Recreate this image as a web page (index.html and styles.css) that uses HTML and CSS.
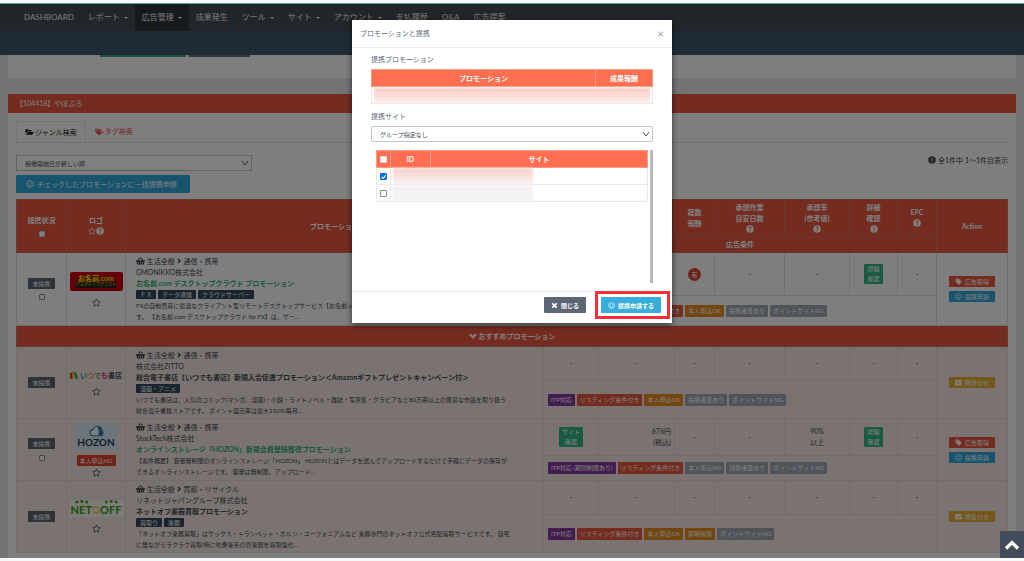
FILE: index.html
```html
<!DOCTYPE html>
<html lang="ja">
<head>
<meta charset="utf-8">
<meta name="viewport" content="width=device-width, initial-scale=1">
<title>広告管理</title>
<link rel="stylesheet" href="styles.css">
</head>
<body>
<svg class="sprite" aria-hidden="true">
  <symbol id="smile" viewBox="0 0 16 16"><circle cx="8" cy="8" r="6.6" fill="none" stroke="currentColor" stroke-width="1.6"/><circle cx="5.6" cy="6.3" r="1.1" fill="currentColor"/><circle cx="10.4" cy="6.3" r="1.1" fill="currentColor"/><path d="M4.5 9.3q3.5 4.4 7 0" fill="none" stroke="currentColor" stroke-width="1.5"/></symbol>
  <symbol id="tag" viewBox="0 0 16 16"><path fill="currentColor" fill-rule="evenodd" d="M1 2.5Q1 1 2.500 1H7q1 0 1.700.7l6 6q.9 1 0 2l-5 5q-1 .9-2 0l-6-6Q1 8 1 7zM4.300 3a1.400 1.400 0 1 0 .01 0z"/></symbol>
  <symbol id="tags" viewBox="0 0 20 16"><path fill="currentColor" fill-rule="evenodd" d="M1 2.500Q1 1 2.500 1H7q1 0 1.700.7l6 6q.9 1 0 2l-5 5q-1 .9-2 0l-6-6Q1 8 1 7zM4.300 3a1.400 1.400 0 1 0 .01 0z"/><path fill="currentColor" d="M9.500 1H11q1 0 1.700.7l6 6q.9 1 0 2l-5 5q-.8.8-1.700.3l5-5.300q1-1 0-2z"/></symbol>
  <symbol id="folder" viewBox="0 0 18 16"><path fill="currentColor" d="M1 12V3.500Q1 2.500 2 2.500h3.500q1 0 1 1v.7H12q1.200 0 1.200 1.200V7H6Q4.600 7 3.800 8zM2 13.500l3-4.700q.5-.8 1.400-.8H17q.8 0 .3.800l-2.500 4q-.5.700-1.400.7z"/></symbol>
  <symbol id="basket" viewBox="0 0 18 16"><path fill="none" stroke="currentColor" stroke-width="2" d="M4 8l3-6h4l3 6"/><path fill="currentColor" fill-rule="evenodd" d="M0 6.500h18v2.500h-1l-1.300 6H2.300L1 9H0zM4.500 10v3H6v-3zm3.800 0v3h1.500v-3zm3.700 0v3h1.500v-3z"/></symbol>
  <symbol id="right" viewBox="0 0 10 16"><path fill="none" stroke="currentColor" stroke-width="3" d="M2 4l4 4-4 4"/></symbol>
  <symbol id="down" viewBox="0 0 16 16"><path fill="none" stroke="currentColor" stroke-width="4.500" d="M2 4.500l6 6 6-6"/></symbol>
  <symbol id="up" viewBox="0 0 16 16"><path fill="none" stroke="currentColor" stroke-width="3.200" d="M2 11.500l6-6 6 6"/></symbol>
  <symbol id="mail" viewBox="0 0 16 16"><path fill="currentColor" d="M0 2h16v1.800L8 9.500 0 3.800zM0 5.500l8 5.700 8-5.700V14H0z"/></symbol>
  <symbol id="cross" viewBox="0 0 16 16"><path fill="none" stroke="currentColor" stroke-width="4" d="M3 3l10 10M13 3L3 13"/></symbol>
  <symbol id="star" viewBox="0 0 16 16"><path fill="none" stroke="currentColor" stroke-width="1.300" d="M8 1.500l2 4.400 4.700.6-3.500 3.300.9 4.700L8 12.200l-4.100 2.300.9-4.700L1.300 6.500 6 5.900z"/></symbol>
  <symbol id="help" viewBox="0 0 16 16"><circle cx="8" cy="8" r="7.500" fill="currentColor"/><path class="mark" d="M5.500 6.200q.2-2.200 2.500-2.200t2.500 1.900q0 1.200-1.300 1.900-1.200.7-1.200 1.700M8 11v2"/></symbol>
  <symbol id="info" viewBox="0 0 16 16"><circle cx="8" cy="8" r="7.500" fill="currentColor"/><path class="mark" d="M8 3.500v6M8 11v2"/></symbol>
</svg>

<div class="screen">
  <header>
    <nav class="nav">
      <a href="#">DASHBOARD</a>
      <a href="#" class="has-menu">レポート</a>
      <a href="#" class="has-menu current">広告管理</a>
      <a href="#">成果発生</a>
      <a href="#" class="has-menu">ツール</a>
      <a href="#" class="has-menu">サイト</a>
      <a href="#" class="has-menu">アカウント</a>
      <a href="#">支払履歴</a>
      <a href="#">Q&amp;A</a>
      <a href="#">広告提案</a>
    </nav>
    <div class="subbar"></div>
  </header>

  <main class="content">
    <section class="search-end"><span class="stub stub-green"></span><span class="stub stub-grey"></span></section>

    <section class="panel">
      <h1 class="panel-title">【104418】やぽぷろ</h1>
      <div class="panel-body">
        <div class="tabs">
          <a href="#" class="tab active"><svg class="icon wide"><use href="#folder"/></svg>ジャンル検索</a>
          <a href="#" class="tab"><svg class="icon wide"><use href="#tags"/></svg>タグ検索</a>
        </div>
        <div class="toolbar">
          <select class="select sort" aria-label="並び順"><option>稼働開始日が新しい順</option></select>
          <p class="count"><svg class="icon on-white"><use href="#info"/></svg> 全1件中 1〜1件目表示</p>
        </div>
        <button class="btn blue bulk"><svg class="icon"><use href="#smile"/></svg>チェックしたプロモーションに一括提携申請</button>

        <table class="list">
          <colgroup><col class="c-status"><col class="c-logo"><col><col class="c-site"><col class="c-pay"><col class="c-multi"><col class="c-days"><col class="c-rate"><col class="c-detail"><col class="c-epc"><col class="c-action"></colgroup>
          <thead>
            <tr class="h-top">
              <th rowspan="2">提携状況<br><input type="checkbox" class="check filled" aria-label="すべて選択"></th>
              <th rowspan="2">ロゴ<br><svg class="icon"><use href="#star"/></svg><svg class="icon"><use href="#help"/></svg></th>
              <th rowspan="2">プロモーション</th>
              <th></th><th></th>
              <th>複数<br>報酬</th>
              <th>承認作業<br>目安日数<br><svg class="icon"><use href="#help"/></svg></th>
              <th>承認率<br>(参考値)<br><svg class="icon"><use href="#help"/></svg></th>
              <th>詳細<br>確認<br><svg class="icon"><use href="#info"/></svg></th>
              <th>EPC<br><svg class="icon"><use href="#help"/></svg></th>
              <th rowspan="2">Action</th>
            </tr>
            <tr class="h-sub"><th colspan="7">広告条件</th></tr>
          </thead>
          <tbody>
            <tr class="r-43">
              <td rowspan="2" class="mid"><span class="state">未提携</span><br><input type="checkbox" class="check" aria-label="お名前.comを選択"></td>
              <td rowspan="2" class="mid"><div class="logo onamae"><b>お名前.com</b><i>デスクトップクラウド</i></div><svg class="icon star"><use href="#star"/></svg></td>
              <td rowspan="2" class="promo">
                <p class="genre"><svg class="icon wide"><use href="#basket"/></svg> 生活全般 <svg class="icon thin"><use href="#right"/></svg> 通信・携帯</p>
                <p>GMONIKKO株式会社</p>
                <p class="name"><a href="#">お名前.com デスクトップクラウド プロモーション</a></p>
                <p class="tags"><span>ＦＸ</span><span>データ通信</span><span>クラウドサーバー</span></p>
                <p class="desc">FXの自動売買に最適なクライアント型リモートデスクトップサービス【お名前.com】で<br>す。 【お名前.com デスクトップクラウド for FX】は、サー...</p>
              </td>
              <td></td><td></td>
              <td class="mid"><span class="round">有</span></td>
              <td class="mid">-</td><td class="mid">-</td>
              <td class="mid"><button class="btn green two">詳細<br>確認</button></td>
              <td class="mid">-</td>
              <td rowspan="2" class="mid act"><button class="btn red"><svg class="icon"><use href="#tag"/></svg>広告取得</button><button class="btn blue"><svg class="icon"><use href="#smile"/></svg>提携申請</button></td>
            </tr>
            <tr class="r-30"><td colspan="7" class="labels"><span class="purple">ITP対応 (期間制限あり)</span><span class="red">リスティング条件付き</span><span class="orange">本人申込OK</span><span class="grey">提携審査あり</span><span class="grey">ポイントサイトNG</span></td></tr>

            <tr class="band"><th colspan="11"><svg class="icon"><use href="#down"/></svg> おすすめプロモーション</th></tr>

            <tr class="r-34 rec">
              <td rowspan="2" class="mid"><span class="state">未提携</span></td>
              <td rowspan="2" class="mid"><div class="logo itsudemo"><svg class="books" viewBox="0 0 14 14"><path fill="#e8452c" d="M0 3h4v11H0z"/><path fill="#f5a623" d="M4 1h3v13H4z"/><path fill="#37a23c" d="M7 3l4-1 3 11-4 1z"/></svg><b><span class="k1">い</span><span class="k2">つ</span><span class="k3">で</span><span class="k4">も</span>書店</b></div><svg class="icon star"><use href="#star"/></svg></td>
              <td rowspan="2" class="promo">
                <p class="genre"><svg class="icon wide"><use href="#basket"/></svg> 生活全般 <svg class="icon thin"><use href="#right"/></svg> 通信・携帯</p>
                <p>株式会社ZITTO</p>
                <p class="name">総合電子書店【いつでも書店】新規入会促進プロモーション＜Amazonギフトプレゼントキャンペーン付＞</p>
                <p class="tags"><span>漫画・アニメ</span></p>
                <p class="desc">いつでも書店は、人気のコミック(マンガ、漫画)・小説・ライトノベル・雑誌・写真集・グラビアなど80万冊以上の豊富な作品を取り扱う<br>総合電子書籍ストアです。 ポイント還元率は最大150%!毎月...</p>
              </td>
              <td class="mid">-</td><td class="mid">-</td><td class="mid">-</td><td class="mid">-</td><td class="mid">-</td><td class="mid">-</td><td class="mid">-</td>
              <td rowspan="2" class="mid act"><button class="btn yellow"><svg class="icon"><use href="#mail"/></svg>問合わせ</button></td>
            </tr>
            <tr class="r-38 rec"><td colspan="7" class="labels"><span class="purple">ITP対応</span><span class="red">リスティング条件付き</span><span class="orange">本人申込OK</span><span class="grey">提携審査あり</span><span class="grey">ポイントサイトNG</span></td></tr>

            <tr class="r-37 rec">
              <td rowspan="2" class="mid"><span class="state">未提携</span><br><input type="checkbox" class="check" aria-label="HOZONを選択"></td>
              <td rowspan="2" class="mid"><div class="logo hozon"><svg viewBox="0 0 28 22"><path fill="#fff" stroke="#2f7fb0" stroke-width="2" d="M7 20q-5-1-5-6t6-6q2-6 8-6 8 1 8 8 3 2 2 6-1 4-5 4z"/><path fill="#2f7fb0" d="M15 2q8 0 9 8 3 2 2 6-1 4-5 4h-4q3-8-2-18z"/></svg><b>HOZON</b></div><span class="ng">本人申込NG</span><svg class="icon star"><use href="#star"/></svg></td>
              <td rowspan="2" class="promo">
                <p class="genre"><svg class="icon wide"><use href="#basket"/></svg> 生活全般 <svg class="icon thin"><use href="#right"/></svg> 通信・携帯</p>
                <p>StockTech株式会社</p>
                <p class="name"><a href="#">オンラインストレージ「HOZON」新規会員登録獲得プロモーション</a></p>
                <p class="desc">【案件概要】 容量無制限のオンラインストレージ「HOZON」 HOZONとはデータを選んでアップロードするだけで手軽にデータの保存が<br>できるオンラインストレージです。 容量は無制限。アップロード...</p>
              </td>
              <td class="mid"><button class="btn green two">サイト<br>確認</button></td>
              <td class="money">676円<br>(税込)</td>
              <td class="mid">-</td><td class="mid">-</td><td class="mid">90%<br>以上</td>
              <td class="mid"><button class="btn green two">詳細<br>確認</button></td>
              <td class="mid">-</td>
              <td rowspan="2" class="mid act"><button class="btn red"><svg class="icon"><use href="#tag"/></svg>広告取得</button><button class="btn blue"><svg class="icon"><use href="#smile"/></svg>提携申請</button></td>
            </tr>
            <tr class="r-25 rec"><td colspan="7" class="labels"><span class="purple">ITP対応 (期間制限あり)</span><span class="red">リスティング条件付き</span><span class="grey">本人申込NG</span><span class="grey">提携審査あり</span><span class="grey">ポイントサイトNG</span></td></tr>

            <tr class="r-34 rec">
              <td rowspan="2" class="mid"><span class="state">未提携</span></td>
              <td rowspan="2" class="mid"><div class="logo netoff"><svg class="dots" viewBox="0 0 54 4"><g fill="#3fa51c"><circle cx="7" cy="2" r="1.500"/><circle cx="12" cy="1.500" r="1.500"/><circle cx="17" cy="2" r="1.500"/><circle cx="37" cy="2" r="1.500"/><circle cx="42" cy="1.500" r="1.500"/><circle cx="47" cy="2" r="1.500"/></g></svg><b>NET<svg class="ring" viewBox="0 0 10 10"><circle cx="5" cy="5" r="3.800" fill="none" stroke="#e5c51f" stroke-width="1.600" stroke-dasharray="10 2"/></svg>OFF</b></div><svg class="icon star"><use href="#star"/></svg></td>
              <td rowspan="2" class="promo">
                <p class="genre"><svg class="icon wide"><use href="#basket"/></svg> 生活全般 <svg class="icon thin"><use href="#right"/></svg> 買取・リサイクル</p>
                <p>リネットジャパングループ株式会社</p>
                <p class="name">ネットオフ楽器買取プロモーション</p>
                <p class="tags"><span>買取り</span><span>楽器</span></p>
                <p class="desc">「ネットオフ楽器買取」はサックス・トランペット・ホルン・ユーフォニアムなど 楽器専門のネットオフ公式宅配買取サービスです。 自宅<br>に居ながらラクラク買取!特に吹奏楽系の管楽器を買取強化...</p>
              </td>
              <td class="mid">-</td><td class="mid">-</td><td class="mid">-</td><td class="mid">-</td><td class="mid">-</td><td class="mid">-</td><td class="mid">-</td>
              <td rowspan="2" class="mid act"><button class="btn yellow"><svg class="icon"><use href="#mail"/></svg>問合わせ</button></td>
            </tr>
            <tr class="r-38 rec"><td colspan="7" class="labels"><span class="purple">ITP対応</span><span class="red">リスティング条件付き</span><span class="orange">本人申込OK</span><span class="orange">即時提携</span><span class="grey">ポイントサイトNG</span></td></tr>
          </tbody>
        </table>
      </div>
    </section>
  </main>

  <div class="backdrop">
    <div class="modal" role="dialog" aria-labelledby="dlg-title">
      <div class="modal-head">
        <h2 id="dlg-title">プロモーションと提携</h2>
        <button class="close" aria-label="閉じる">×</button>
      </div>
      <div class="modal-body">
        <h3>提携プロモーション</h3>
        <table class="mini">
          <colgroup><col><col class="m-pay"></colgroup>
          <tr><th>プロモーション</th><th>成果報酬</th></tr>
          <tr><td colspan="2" class="masked"><div class="mask"></div></td></tr>
        </table>
        <h3><label for="group">提携サイト</label></h3>
        <select id="group" class="select group"><option>グループ指定なし</option></select>
        <div class="sites">
          <table class="mini">
            <colgroup><col class="m-check"><col class="m-id"><col></colgroup>
            <tr><th><input type="checkbox" class="check filled" aria-label="すべてのサイト"></th><th>ID</th><th>サイト</th></tr>
            <tr><td class="mid"><input type="checkbox" class="check" checked aria-label="サイト1"></td><td colspan="2" class="masked"><div class="mask half top"></div></td></tr>
            <tr><td class="mid"><input type="checkbox" class="check" aria-label="サイト2"></td><td colspan="2" class="masked"><div class="mask half bottom"></div></td></tr>
          </table>
          <span class="thumb"></span>
        </div>
      </div>
      <div class="modal-foot">
        <button class="btn slate"><svg class="icon"><use href="#cross"/></svg>閉じる</button>
        <button class="btn sky apply"><svg class="icon"><use href="#smile"/></svg>提携申請する</button>
      </div>
    </div>
  </div>
  <a href="#" class="to-top" aria-label="ページの先頭へ"><svg><use href="#up"/></svg></a>
</div>
</body>
</html>
```
FILE: styles.css
```css
* { box-sizing: border-box; }

body {
  margin: 0;
  padding: 3px 0;
  background: #f8f8f8;
  color: #434a54;
  font: 7px/11px Lato, "Noto Sans CJK JP", sans-serif;
}

h1, h2, h3, p { margin: 0; font-size: 7px; font-weight: 400; }
a { color: inherit; text-decoration: none; }
button, select, input { margin: 0; font-family: inherit; }
.sprite { display: block; width: 0; height: 0; }

.icon { width: 8px; height: 8px; vertical-align: -1px; }
.icon.wide { width: 9px; }
.icon.thin { width: 5px; }
.mark { fill: none; stroke: var(--mark, #e85640); stroke-width: 2; }
.on-white { --mark: #fdfdfd; }

.screen {
  position: relative;
  min-height: calc(100vh - 6px);
  border-top: 1px solid #5f9ea0;
  background: #e6e6ec;
  overflow: hidden;
}

/* navigation */
.nav { display: flex; height: 27px; padding: 0 17px; background: #444a52; color: #f4f4f4; font-size: 8px; }
.nav a { display: flex; align-items: center; gap: 4px; padding: 0 7px; white-space: nowrap; }
.nav .current { background: #2f343b; }
.has-menu::after { content: ""; border: 2px solid transparent; border-top-color: currentColor; border-bottom: 0; }
.subbar { height: 24px; background: #3e586e; }

.content { padding: 0 8px; }
.search-end { display: flex; gap: 3px; height: 23px; margin-bottom: 16px; padding-left: 92px; background: #fdfdfd; }
.stub { height: 2px; }
.stub-green { width: 86px; background: #2fa67c; }
.stub-grey { width: 61px; background: #656d78; }

.panel { background: #fdfdfd; }
.panel-title { padding: 4px 8px; background: #e85640; color: #fff; }
.panel-body { padding: 8px 8px 5px; }
.tabs { display: flex; border-bottom: 1px solid #e2e2e2; margin-bottom: 12px; }
.tab { display: flex; align-items: center; gap: 1px; height: 21px; padding: 0 9px; color: #e85640; }
.tab.active { padding: 0 8px; border: 1px solid #e8e8e8; border-bottom: 0; color: #222; }
.toolbar { display: flex; justify-content: space-between; align-items: flex-start; margin-bottom: 4px; }
.select {
  appearance: none;
  height: 16px;
  padding: 0 8px;
  border: 1px solid #c4c4c4;
  border-radius: 0;
  color: #434a54;
  font-size: 6px;
  background: #fff url("data:image/svg+xml,%3Csvg xmlns='http://www.w3.org/2000/svg' viewBox='0 0 8 8'%3E%3Cpath d='M1 2l3 4 3-4' fill='none' stroke='%23555'/%3E%3C/svg%3E") no-repeat right 2px center / 8px 8px;
}
.sort { width: 236px; }
.count { text-align: right; }

.btn { border: 0; border-radius: 1px; color: #fff; font-size: 6px; line-height: 11px; }
.btn .icon { margin-right: 3px; width: 7px; height: 7px; }
.blue { background: #33a8dd; }
.red { background: #e85640; }
.green { background: #33b586; }
.yellow { background: #e6b035; }
.purple { background: #84389e; }
.orange { background: #e68a1e; }
.grey { background: #a0a8b4; }
.slate { background: #5d6675; }
.sky { background: #37acdd; }
.bulk { display: block; height: 18px; margin-bottom: 6px; padding: 0 13px 0 10px; font-size: 7px; }
.bulk .icon { width: 8px; height: 8px; }

/* promotion list */
table { width: 100%; border-collapse: collapse; table-layout: fixed; }
th, td { padding: 0; }
.c-status { width: 50px; }
.c-logo { width: 59px; }
.c-site { width: 55px; }
.c-pay { width: 76px; }
.c-multi { width: 40px; }
.c-days { width: 70px; }
.c-rate { width: 65px; }
.c-detail { width: 48px; }
.c-epc { width: 39px; }
.c-action { width: 71px; }
.list th { border: 1px solid #d0705f; background: #e85640; color: #fff; }
.list td { border: 1px solid #e0e0e2; }
.list .rec td { background: #f4e6e2; border-color: #e4d8d6; }
.h-top { height: 37px; }
.h-sub { height: 16px; }
.r-43 { height: 43px; }
.r-30 { height: 30px; }
.r-34 { height: 34px; }
.r-38 { height: 38px; }
.r-37 { height: 37px; }
.r-25 { height: 25px; }
.band { height: 21px; }
.mid { text-align: center; }
.money { padding-right: 3px; text-align: right; }

.promo { padding: 2px 0 2px 10px; white-space: nowrap; }
.name { font-weight: 700; }
.name a { color: #2cb07e; }
.tags { display: flex; align-items: center; gap: 2px; height: 11px; font-size: 6px; }
.tags span { padding: 0 4px; border-radius: 1px; background: #34495e; color: #fff; line-height: 9px; }
.desc { font-size: 6px; }
.labels { font-size: 6px; white-space: nowrap; }
.list .labels { padding-left: 4px; }
.labels span { display: inline-block; margin-right: 2px; padding: 0 3px; border-radius: 1px; color: #fff; line-height: 12px; }

.check {
  appearance: none;
  width: 7px;
  height: 7px;
  border: 1px solid #8a8a8a;
  border-radius: 1px;
  background: #fff;
  vertical-align: middle;
}
.list .check { width: 6px; height: 6px; margin-top: 4px; }
.check.filled { border-color: #ddd; }
.check:checked {
  border-color: #0a6cf0;
  background: #0a6cf0 url("data:image/svg+xml,%3Csvg xmlns='http://www.w3.org/2000/svg' viewBox='0 0 8 8'%3E%3Cpath d='M1 4l2 2 4-5' fill='none' stroke='white' stroke-width='1.500'/%3E%3C/svg%3E") center / 6px 6px;
}
.state { display: inline-block; padding: 0 4px; border-radius: 1px; background: #5a6370; color: #fff; font-size: 6px; }
.round { display: inline-block; width: 13px; border-radius: 50%; background: #e0452f; color: #fff; font-size: 6px; line-height: 13px; }
.two { padding: 0 3px; line-height: 10px; }
.act .btn { display: block; width: 46px; margin: 0 auto 4px; padding: 0; }
.act .btn:last-child { margin-bottom: 0; }
.star { display: block; width: 9px; height: 9px; margin: 0 auto; }

/* advertiser logos */
.logo { width: 53px; margin: 0 auto; }
.logo b, .logo i { display: block; white-space: nowrap; }
.onamae { height: 19px; margin-bottom: 7px; padding-top: 2px; border-radius: 2px; background: #c8000b; }
.onamae b { color: #f5e400; font-size: 7px; font-weight: 900; line-height: 8px; text-shadow: 0 0 1px #000; }
.onamae i { width: 40px; margin: 0 auto; background: #222; color: #f5e400; font-size: 4px; font-style: normal; line-height: 6px; }
.itsudemo { display: flex; justify-content: center; align-items: center; gap: 2px; margin-bottom: 6px; }
.books { width: 8px; height: 8px; }
.k1 { color: #1597d4; }
.k2 { color: #f08a1d; }
.k3 { color: #43a838; }
.k4 { color: #e0338a; }
.hozon { width: 44px; height: 27px; margin-bottom: 5px; padding-top: 2px; background: #dcebf4; color: #173a5e; }
.hozon svg { display: block; width: 15px; height: 12px; margin: 0 auto; }
.hozon b { font-size: 10px; line-height: 10px; }
.ng { display: block; width: 39px; margin: 0 auto 2px; border-radius: 1px; background: #e0452f; color: #fff; font-size: 6px; }
.netoff { height: 17px; margin-bottom: 7px; background: #fbf6f4; color: #3fa51c; }
.dots { display: block; width: 53px; height: 4px; }
.netoff b { font-size: 11px; font-weight: 900; line-height: 12px; }
.ring { width: 8px; height: 8px; }

/* dialog */
.backdrop {
  position: absolute;
  inset: 0;
  display: flex;
  justify-content: center;
  align-items: flex-start;
  padding-top: 16px;
  background: rgba(0, 0, 0, .5);
}
.modal { width: 320px; background: #fff; color: #5d6675; box-shadow: 0 2px 6px rgba(0, 0, 0, .6); }
.modal-head { display: flex; justify-content: space-between; align-items: center; height: 28px; padding: 0 8px; border-bottom: 1px solid #ececec; }
.close { padding: 0; border: 0; background: none; color: #aaa; font-size: 12px; line-height: 12px; }
.modal-body { padding: 6px 19px 8px; }
.modal-body h3 { margin-bottom: 4px; }
.mini th { height: 17px; border: 1px solid #fd9a83; background: #fe6f51; color: #fff; }
.mini td { height: 17px; border: 1px solid #e9e9e9; }
.mini + h3 { margin-top: 7px; }
.m-pay { width: 57px; }
.m-check { width: 14px; }
.m-id { width: 40px; }
.mask { height: 15px; margin: 0 2px; background: linear-gradient(#fac8c2, #fbeeec); filter: blur(1px); }
.half { width: 140px; height: 16px; }
.half.top { background: linear-gradient(#fad0cb, #f7f0f0); }
.half.bottom { background: linear-gradient(#f7f0f0, #f4f4f5); }
.group { display: block; width: 100%; margin-bottom: 8px; border-radius: 2px; }
.sites { display: flex; justify-content: space-between; gap: 2px; height: 133px; padding-left: 5px; }
.sites .mini { align-self: flex-start; }
.thumb { flex: 0 0 3px; background: #b8b8b8; }
.modal-foot { display: flex; justify-content: flex-end; gap: 15px; padding: 5px 11px 10px; border-top: 1px solid #ececec; }
.modal-foot .btn { height: 16px; padding: 0 7px; font-weight: 700; white-space: nowrap; }
.apply { position: relative; }
.apply::after { content: ""; position: absolute; inset: -6px -9px -6px -6px; border: 3px solid #fb2c36; }

.to-top { position: absolute; right: 0; bottom: 0; display: grid; place-items: center; width: 24px; height: 27px; background: #434c5a; color: #fff; }
.to-top svg { width: 16px; height: 16px; }
```
